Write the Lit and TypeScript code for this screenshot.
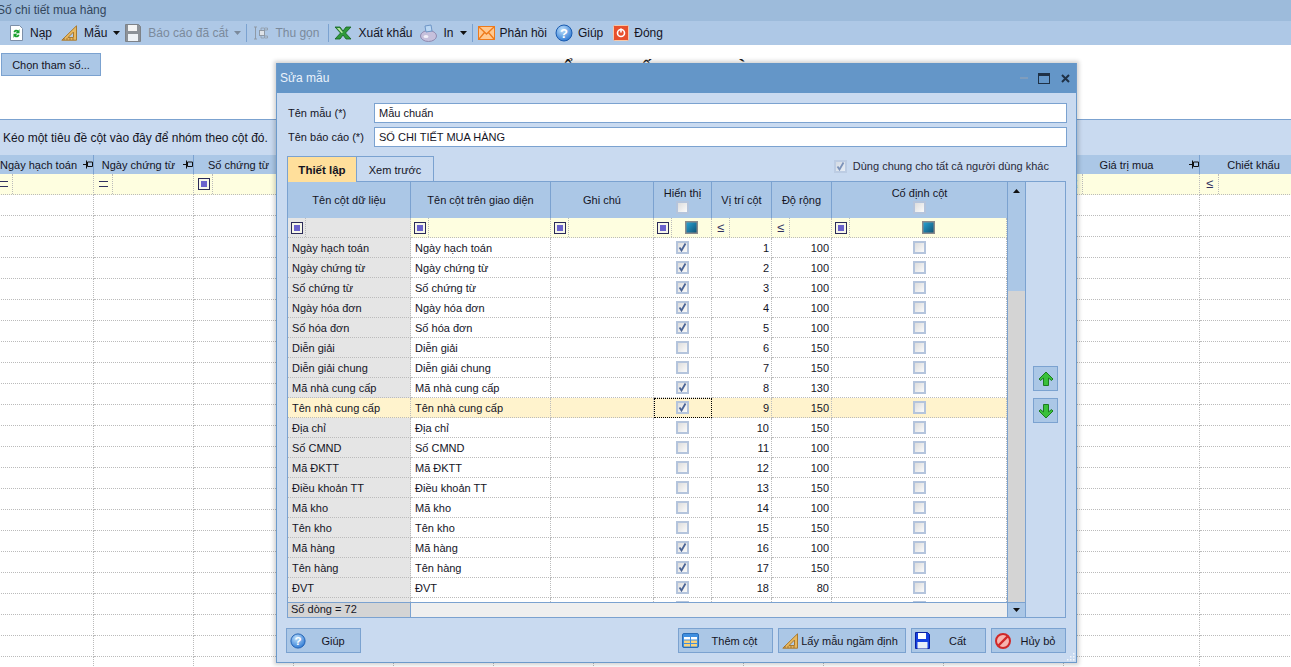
import { LitElement, html, css } from "lit";
import { customElement } from "lit/decorators.js";

const FLOPPY = (c: string, inner: string) => html`<svg width="16" height="18" viewBox="0 0 16 18"><path d="M.5.5h13l2 2v15H.5z" fill="${c}" stroke="${inner}"/><rect x="3" y="1" width="9" height="6" fill="#f4f4f4"/><rect x="3" y="10" width="10" height="7" fill="#eef2f6"/></svg>`;
const HELP = (s: number) => html`<svg width="${s}" height="${s}" viewBox="0 0 18 18"><defs><radialGradient id="hg" cx=".4" cy=".3" r=".8"><stop offset="0" stop-color="#bfe0fb"/><stop offset="1" stop-color="#1f6fd0"/></radialGradient></defs><circle cx="9" cy="9" r="8" fill="url(#hg)" stroke="#1a5bb0"/><text x="9" y="13.5" text-anchor="middle" font-family="Liberation Sans" font-weight="700" font-size="13" fill="#fff">?</text></svg>`;
const RULER = html`<svg width="17" height="16" viewBox="0 0 17 16"><path d="M15.5.8v14.4H.8z" fill="#e8b860" stroke="#a87a30"/><path d="M12.5 7v5.5H7z" fill="#b3cbe8" stroke="#a87a30"/><path d="M3 13v2M6 13v2M9 13v2M12 13v2" stroke="#8a5a20" stroke-width=".7"/></svg>`;

const ICONS: Record<string, unknown> = {
  reload: html`<svg width="13" height="16" viewBox="0 0 13 16"><path d="M.5.5h9l3 3v12H.5z" fill="#fff" stroke="#7d8fa8"/><path d="M3.5 7a3 3 0 0 1 5-1.5L9.5 4v4.200H5.500L7 6.800A1.500 1.500 0 0 0 5 7.500z" fill="#18a02c"/><path d="M9.500 10a3 3 0 0 1-5 1.500L3.500 13V8.800h4L6 10.200A1.500 1.500 0 0 0 8 9.500z" fill="#18a02c"/></svg>`,
  ruler: RULER,
  save: FLOPPY("#8d9298", "#7d8288"),
  tree: html`<svg width="16" height="16" viewBox="0 0 16 16" fill="none" stroke="#8f99a5"><path d="M1 2h3M2.500 2v12M1 14h3"/><rect x="6.500" y="5.500" width="5" height="5" fill="#dfe3e8"/><path d="M11.500 3h3v2h-3zM11.500 11h3v2h-3zM8 5.500V3h3M8 10.500V13h3" stroke-width=".8"/></svg>`,
  excel: html`<svg width="18" height="14" viewBox="0 0 18 14"><path d="M1 1h5l3 4 3-4h5l-5.500 6L17 13h-5L9 9l-3 4H1l5.500-6z" fill="#2f9a3a" stroke="#14601e" stroke-width=".8"/><path d="M3 2h2.500L9 6.500 7.500 7z" fill="#bde8a8"/></svg>`,
  print: html`<svg width="17" height="18" viewBox="0 0 17 18"><ellipse cx="8.500" cy="12" rx="8" ry="5.500" fill="#c6c0dc" stroke="#8f8ab0"/><path d="M5 2l6-1 1 6-6 1z" fill="#bcd8f4" stroke="#6d95c6"/><ellipse cx="6" cy="12.500" rx="2.500" ry="1.500" fill="#f3f1fa"/></svg>`,
  mail: html`<svg width="17" height="14" viewBox="0 0 17 14"><rect x=".5" y=".5" width="16" height="13" fill="#ffc890" stroke="#ee7a1a"/><path d="M1 1l7.500 7L16 1M1 13l5.500-6.500M16 13l-5.500-6.500" fill="none" stroke="#ee7a1a" stroke-width="1.300"/></svg>`,
  help: HELP(18),
  close: html`<svg width="16" height="16" viewBox="0 0 16 16"><rect x=".5" y=".5" width="15" height="15" rx="1" fill="#e8502c" stroke="#f8c8a8"/><circle cx="8" cy="8" r="3.500" fill="none" stroke="#fff" stroke-width="1.600"/><path d="M8 3.500v4" stroke="#fff" stroke-width="1.600"/></svg>`,
  table: html`<svg width="17" height="15" viewBox="0 0 17 15"><rect x=".5" y=".5" width="16" height="14" rx="1.500" fill="#3f8fe0" stroke="#2a6db8"/><path d="M2 4h6v2.500H2zM9 4h6v2.500H9z" fill="#fff"/><path d="M2 7.500h6V10H2zM9 7.500h6V10H9zM2 11h6v2.500H2zM9 11h6v2.500H9z" fill="#f8d27a"/></svg>`,
  blue: html`<svg width="15" height="17" viewBox="0 0 15 17"><path d="M.5.500h12l2 2v14H.500z" fill="#1640e0" stroke="#0a1fa0"/><rect x="3" y="1" width="8" height="6" fill="#fff"/><rect x="2.500" y="10" width="10" height="6.500" fill="#e8eef8"/></svg>`,
  no: html`<svg width="16" height="16" viewBox="0 0 16 16"><circle cx="8" cy="8" r="7" fill="#f7b5b0" stroke="#d02828" stroke-width="2"/><path d="M3.500 12.500l9-9" stroke="#d02828" stroke-width="2.400"/></svg>`,
};

const ARROW = (up: boolean) => html`<svg width="16" height="16" viewBox="0 0 16 16" class="${up ? "" : "flip"}"><path d="M8 1l7 7-1.500 1.500L10.500 7v7.500h-5V7L2.500 9.500 1 8z" fill="#39c03a" stroke="#1c7d20" stroke-linejoin="round"/></svg>`;
const PIN = html`<svg class="pin" width="10" height="9" viewBox="0 0 10 9"><path d="M0 4.500h3.500M4.500 2h5v4.500h-5zM3.500 .5v8" fill="none" stroke="#111"/></svg>`;
const CARET = (ml = 0) => html`<svg class="caret" style="margin-left:${ml}px" width="7" height="4" viewBox="0 0 7 4"><path d="M0 0h7L3.500 4z"/></svg>`;

interface Tool { label: string; icon: string; off?: boolean; caret?: boolean; ml: number; gap: number; sep?: boolean }
const TOOLS: Tool[] = [
  { label: "Nạp", icon: "reload", ml: 10, gap: 7 },
  { label: "Mẫu", icon: "ruler", ml: 9, gap: 6, caret: true },
  { label: "Báo cáo đã cắt", icon: "save", off: true, caret: true, ml: 5, gap: 7 },
  { label: "", icon: "", sep: true, ml: 5, gap: 0 },
  { label: "Thu gọn", icon: "tree", off: true, ml: 6, gap: 6 },
  { label: "", icon: "", sep: true, ml: 9, gap: 0 },
  { label: "Xuất khẩu", icon: "excel", ml: 5, gap: 6 },
  { label: "In", icon: "print", caret: true, ml: 7, gap: 7 },
  { label: "", icon: "", sep: true, ml: 5, gap: 0 },
  { label: "Phản hồi", icon: "mail", ml: 5, gap: 5 },
  { label: "Giúp", icon: "help", ml: 8, gap: 5 },
  { label: "Đóng", icon: "close", ml: 10, gap: 5 },
];

interface BgCol { label: string; w: number; filter: string; pin?: boolean }
const BG_COLS: BgCol[] = [
  { label: "Ngày hạch toán", w: 100, filter: "eq", pin: true },
  { label: "Ngày chứng từ", w: 100, filter: "eq", pin: true },
  { label: "Số chứng từ", w: 100, filter: "sq" },
  { label: "", w: 100, filter: "" },
  { label: "", w: 100, filter: "" },
  { label: "", w: 100, filter: "" },
  { label: "", w: 150, filter: "" },
  { label: "", w: 80, filter: "" },
  { label: "", w: 120, filter: "" },
  { label: "", w: 120, filter: "" },
  { label: "Giá trị mua", w: 136, filter: "le", pin: true },
  { label: "Chiết khấu", w: 118, filter: "le" },
];

const ROWS: [string, boolean, number][] = [
  ["Ngày hạch toán", true, 100], ["Ngày chứng từ", true, 100], ["Số chứng từ", true, 100],
  ["Ngày hóa đơn", true, 100], ["Số hóa đơn", true, 100], ["Diễn giải", false, 150],
  ["Diễn giải chung", false, 150], ["Mã nhà cung cấp", true, 130], ["Tên nhà cung cấp", true, 150],
  ["Địa chỉ", false, 150], ["Số CMND", false, 100], ["Mã ĐKTT", false, 100],
  ["Điều khoản TT", false, 150], ["Mã kho", false, 100], ["Tên kho", false, 150],
  ["Mã hàng", true, 100], ["Tên hàng", true, 150], ["ĐVT", true, 80], ["", true, 0],
];

@customElement("app-root")
export class AppRoot extends LitElement {
  static styles = css`
    :host { display: block; width: 1291px; height: 667px; overflow: hidden; position: relative; background: #fff;
      font: 11px "Liberation Sans", Arial, sans-serif; color: #14141f; }
    .titlebar { height: 21px; background: #9dbbdb; font-size: 12px; line-height: 21px; text-indent: -3px; color: #33465c; white-space: nowrap; }
    .toolbar { height: 24px; background: #aec8e6; font-size: 12px; display: flex; align-items: center; position: relative; }
    .tool { display: flex; align-items: center; flex: none; }
    .tool.off { color: #7b8a9c; }
    .tool.off svg.caret { fill: #7b8a9c; }
    .caret { flex: none; fill: #111; }
    .tsep { width: 1px; height: 18px; background: #7ba2d0; flex: none; }
    .head { height: 74px; display: flex; align-items: flex-start; background: #fff; }
    .param { margin: 8px 0 0 1px; width: 100px; height: 23px; box-sizing: border-box; background: #abc7e6; border: 1px solid #7ba2d0;
      font: inherit; color: inherit; padding: 0; }
    .rtitle { margin: 15px 0 0 446px; font-size: 20px; font-weight: 700; white-space: nowrap; line-height: 21px; color: #222; }
    .group { height: 36px; box-sizing: border-box; background: #c9daf0; font-size: 12px; border-top: 1px solid #7ba2d0; padding: 11px 0 0 3px; }
    .bg { display: flex; margin-left: -6px; }
    .bgc { flex: none; box-sizing: border-box; }
    .bgh { height: 19px; box-sizing: border-box; padding-right: 10px; background: #abc7e6; border-right: 1px solid #7ba2d0; display: flex; align-items: center; justify-content: center;
      white-space: nowrap; position: relative; overflow: hidden; }
    .bgh .pin { position: absolute; right: 0; top: 5px; }
    .bgf { height: 21px; background: #fefee0; border-bottom: 1px dotted #bbb; border-right: 1px dotted #bbb; display: flex; align-items: center; position: relative; box-sizing: border-box; }
    .bgr { height: 21px; border-bottom: 1px dotted #bbb; border-right: 1px dotted #bbb; box-sizing: border-box; }
    .ficon { flex: none; width: 18px; height: 100%; display: flex; align-items: center; justify-content: center; border-right: 1px dotted #bbb; box-sizing: border-box; margin-left: 1px; }
    .fsq { width: 12px; height: 12px; box-sizing: border-box; border: 1px solid #2a2a58; background: #6a62cc; box-shadow: inset 0 0 0 2px #f6f6ea; flex: none; }
    .feq { width: 9px; height: 4px; border-top: 1px solid #30305f; border-bottom: 1px solid #30305f; }
    .fle { font-size: 13px; color: #30305f; line-height: 14px; }

    .dlg { position: absolute; left: 276px; top: 63px; width: 801px; height: 600px; box-sizing: border-box; background: #c9daf0;
      border: 1px solid #6c9acb; border-top: 0; box-shadow: 0 0 4px 2px rgba(0,0,0,.18); display: flex; flex-direction: column; }
    .dtitle { height: 30px; background: #6496c8; display: flex; align-items: center; color: #eaf2fb; font-size: 12px; padding-left: 3px; flex: none; }
    .wctl { margin-left: auto; display: flex; align-items: center; gap: 9px; padding-right: 6px; }
    .wctl .x { margin-left: 2px; }
    .form { display: grid; grid-template-columns: 86px 693px; row-gap: 4px; padding: 10px 0 0 11px; flex: none; }
    .form label { line-height: 20px; }
    .inp { height: 20px; box-sizing: border-box; background: #fff; border: 1px solid #7ba2d0; padding-left: 4px; line-height: 19px; }
    .tabs { display: flex; height: 25px; margin: 9px 0 0 10px; flex: none; position: relative; z-index: 1; }
    .tab { box-sizing: border-box; height: 26px; display: flex; align-items: center; justify-content: center; border: 1px solid #7ba2d0; border-bottom: 0; }
    .tab.on { width: 69px; background: #ffdf9b; font-weight: 700; font-size: 11.5px; border-right: 0; }
    .tab.off { width: 78px; }
    .share { margin-left: auto; margin-right: 27px; display: flex; align-items: center; gap: 6px; height: 20px; color: #2a2a3a; }
    .share .cb { opacity: .6; }
    .box { display: flex; margin-left: 10px; height: 437px; width: 779px; box-sizing: border-box; border: 1px solid #7ba2d0; flex: none; }
    .main { width: 720px; flex: none; display: flex; flex-direction: column; border-right: 1px solid #7ba2d0; box-sizing: border-box; overflow: hidden; background: #fff; }
    .scroller { flex: 1; overflow: hidden; }
    .gh, .gf, .gr { display: grid; grid-template-columns: 123px 140px 103px 58px 60px 60px 175px; }
    .gh { height: 36px; background: #abc7e6; flex: none; }
    .gh > div { border-right: 1px solid #7ba2d0; box-sizing: border-box; display: flex; flex-direction: column; gap: 2px; align-items: center; justify-content: center; }
    .gh > div:last-child { border-right: 0; }
    .gf { height: 20px; background: #fefee0; }
    .gf > div { border-bottom: 1px dotted #bbb; border-right: 1px dotted #bbb; box-sizing: border-box; display: flex; align-items: center; }
    .gf .d0 { background: #e5e5e5; }
    .gf .ficon { margin-left: 0; }
    .gf .center { flex: 1; display: flex; justify-content: center; }
    .gr { height: 20px; }
    .gr > div { border-bottom: 1px dotted #bbb; border-right: 1px dotted #bbb; box-sizing: border-box; display: flex; align-items: center; padding: 0 4px; white-space: nowrap; }
    .gr .d0 { background: #e5e5e5; }
    .gr.sel > div { background: #fff3cd; }
    .gr .c { justify-content: center; }
    .gr .r { justify-content: flex-end; padding-right: 2px; }
    .gr > .focus { outline: 1px dotted #000; outline-offset: -1px; }
    .status { height: 14px; flex: none; display: grid; grid-template-columns: 123px 1fr; border-top: 1px solid #7ba2d0; background: #efefef; line-height: 13px; }
    .status div:first-child { background: #d4d4d4; border-right: 1px solid #7ba2d0; padding-left: 3px; }
    .vbar { width: 18px; box-sizing: border-box; flex: none; display: flex; flex-direction: column; background: #d4d4d4; border-right: 1px solid #7ba2d0; }
    .vbar .thumb { height: 109px; background: #abc7e6; display: flex; justify-content: center; padding-top: 7px; box-sizing: border-box; flex: none; }
    .vbar .rest { flex: 1; }
    .vbar .down { height: 14px; background: #abc7e6; display: flex; align-items: center; justify-content: center; border-top: 1px solid #7ba2d0; }
    .up { transform: rotate(180deg); }
    .side { flex: 1; display: flex; flex-direction: column; align-items: center; gap: 7px; padding-top: 184px; }
    .ab { width: 25px; height: 25px; box-sizing: border-box; background: #abc7e6; border: 1px solid #7ba2d0; display: flex; align-items: center; justify-content: center; }
    .flip { transform: rotate(180deg); }
    .foot { display: flex; margin: 10px 0 0 9px; width: 780px; flex: none; }
    .btn { height: 25px; box-sizing: border-box; background: #abc7e6; border: 1px solid #7ba2d0; display: flex; align-items: center; padding-left: 3px; flex: none; white-space: nowrap; }
    .btn span { flex: 1; text-align: center; }
    .b-help { width: 75px; margin-right: auto; }
    .b-add { width: 95px; margin-right: 5px; }
    .b-add span { padding-right: 2px; }
    .b-def { width: 128px; margin-right: 5px; }
    .b-def span { padding-right: 5px; }
    .b-save { width: 75px; margin-right: 5px; }
    .b-cancel { width: 75px; }
    .grip { position: absolute; right: 1px; bottom: 1px; }
    .cb { width: 13px; height: 13px; box-sizing: border-box; border: 2px solid #b4c4dc; background: linear-gradient(135deg, #ddd, #fbfbfb); display: block; flex: none; }
    .cb svg { display: block; }
  `;

  private cb(on: boolean) {
    return html`<span class="cb">${on ? html`<svg width="9" height="9" viewBox="0 0 9 9"><path d="M1.500 4.500L3.500 7.500 7.500.5" fill="none" stroke="#4a6496" stroke-width="1.800"/></svg>` : ""}</span>`;
  }
  private tealBox() {
    return html`<svg width="13" height="13" viewBox="0 0 13 13"><defs><linearGradient id="tl" x1="0" y1="0" x2="1" y2="1"><stop offset="0" stop-color="#2aa7d8"/><stop offset="1" stop-color="#0f4f70"/></linearGradient></defs><rect x=".75" y=".75" width="11.500" height="11.500" fill="url(#tl)" stroke="#8a8a8a" stroke-width="1.500"/></svg>`;
  }
  private bgFilter(f: string) {
    if (f === "eq") return html`<span class="feq"></span>`;
    if (f === "le") return html`<span class="fle">≤</span>`;
    if (f === "sq") return html`<span class="fsq"></span>`;
    return "";
  }

  render() {
    return html`
      <div class="titlebar">Số chi tiết mua hàng</div>
      <div class="toolbar">
        ${TOOLS.map((t) =>
          t.sep
            ? html`<span class="tsep" style="margin-left:${t.ml}px"></span>`
            : html`<div class="tool ${t.off ? "off" : ""}" style="margin-left:${t.ml}px;gap:${t.gap}px">${ICONS[t.icon]}<span>${t.label}</span>${t.caret ? CARET(6 - t.gap) : ""}</div>`
        )}
      </div>
      <div class="head">
        <button class="param">Chọn tham số...</button>
        <div class="rtitle">SỔ CHI TIẾT MUA HÀNG</div>
      </div>
      <div class="group">Kéo một tiêu đề cột vào đây để nhóm theo cột đó.</div>
      <div class="bg">
        ${BG_COLS.map((c) => html`<div class="bgc" style="width:${c.w}px">
          <div class="bgh">${c.label}${c.pin ? PIN : ""}</div>
          <div class="bgf">${c.filter ? html`<span class="ficon">${this.bgFilter(c.filter)}</span>` : ""}</div>
          ${Array.from({ length: 23 }, () => html`<div class="bgr"></div>`)}
        </div>`)}
      </div>

      <div class="dlg">
        <div class="dtitle">Sửa mẫu
          <div class="wctl">
            <svg width="9" height="10" viewBox="0 0 9 10"><rect y="4" width="8" height="2" fill="#7f9dbd"/></svg>
            <svg width="12" height="11" viewBox="0 0 12 11"><rect x=".5" y=".5" width="11" height="10" fill="none" stroke="#1f3146"/><rect x="1" y="1" width="10" height="2" fill="#1f3146"/></svg>
            <svg class="x" width="9" height="9" viewBox="0 0 9 9"><path d="M1 1l7 7M8 1l-7 7" stroke="#1f3146" stroke-width="2"/></svg>
          </div>
        </div>
        <div class="form">
          <label>Tên mẫu (*)</label><div class="inp">Mẫu chuẩn</div>
          <label>Tên báo cáo (*)</label><div class="inp">SỔ CHI TIẾT MUA HÀNG</div>
        </div>
        <div class="tabs">
          <div class="tab on">Thiết lập</div>
          <div class="tab off">Xem trước</div>
          <div class="share">${this.cb(true)}<span>Dùng chung cho tất cả người dùng khác</span></div>
        </div>
        <div class="box">
          <div class="main">
            <div class="gh">
              <div>Tên cột dữ liệu</div><div>Tên cột trên giao diện</div><div>Ghi chú</div>
              <div>Hiển thị${this.cb(false)}</div><div>Vị trí cột</div><div>Độ rộng</div>
              <div>Cố định cột${this.cb(false)}</div>
            </div>
            <div class="scroller">
              <div class="gf">
                <div class="d0"><span class="ficon"><span class="fsq"></span></span></div>
                <div><span class="ficon"><span class="fsq"></span></span></div>
                <div><span class="ficon"><span class="fsq"></span></span></div>
                <div><span class="ficon"><span class="fsq"></span></span><span class="center">${this.tealBox()}</span></div>
                <div><span class="ficon"><span class="fle">≤</span></span></div>
                <div><span class="ficon"><span class="fle">≤</span></span></div>
                <div><span class="ficon"><span class="fsq"></span></span><span class="center">${this.tealBox()}</span></div>
              </div>
              ${ROWS.map((r, i) => html`<div class="gr ${i === 8 ? "sel" : ""}">
                <div class="d0">${r[0]}</div><div>${r[0]}</div><div></div>
                <div class="c ${i === 8 ? "focus" : ""}">${this.cb(r[1])}</div>
                <div class="r">${r[2] ? i + 1 : ""}</div><div class="r">${r[2] || ""}</div>
                <div class="c">${this.cb(false)}</div>
              </div>`)}
            </div>
            <div class="status"><div>Số dòng = 72</div><div></div></div>
          </div>
          <div class="vbar">
            <div class="thumb"><svg class="caret up" width="7" height="4" viewBox="0 0 7 4"><path d="M0 0h7L3.500 4z"/></svg></div>
            <div class="rest"></div>
            <div class="down">${CARET()}</div>
          </div>
          <div class="side">
            <div class="ab">${ARROW(true)}</div>
            <div class="ab">${ARROW(false)}</div>
          </div>
        </div>
        <div class="foot">
          <div class="btn b-help">${HELP(16)}<span>Giúp</span></div>
          <div class="btn b-add">${ICONS.table}<span>Thêm cột</span></div>
          <div class="btn b-def">${RULER}<span>Lấy mẫu ngầm định</span></div>
          <div class="btn b-save">${ICONS.blue}<span>Cất</span></div>
          <div class="btn b-cancel">${ICONS.no}<span>Hủy bỏ</span></div>
        </div>
        <svg class="grip" width="9" height="9" viewBox="0 0 9 9" fill="#f2f6fb"><rect x="7" y="1" width="1.500" height="1.500"/><rect x="4" y="4" width="1.500" height="1.500"/><rect x="7" y="4" width="1.500" height="1.500"/><rect x="1" y="7" width="1.500" height="1.500"/><rect x="4" y="7" width="1.500" height="1.500"/><rect x="7" y="7" width="1.500" height="1.500"/></svg>
      </div>
    `;
  }
}
